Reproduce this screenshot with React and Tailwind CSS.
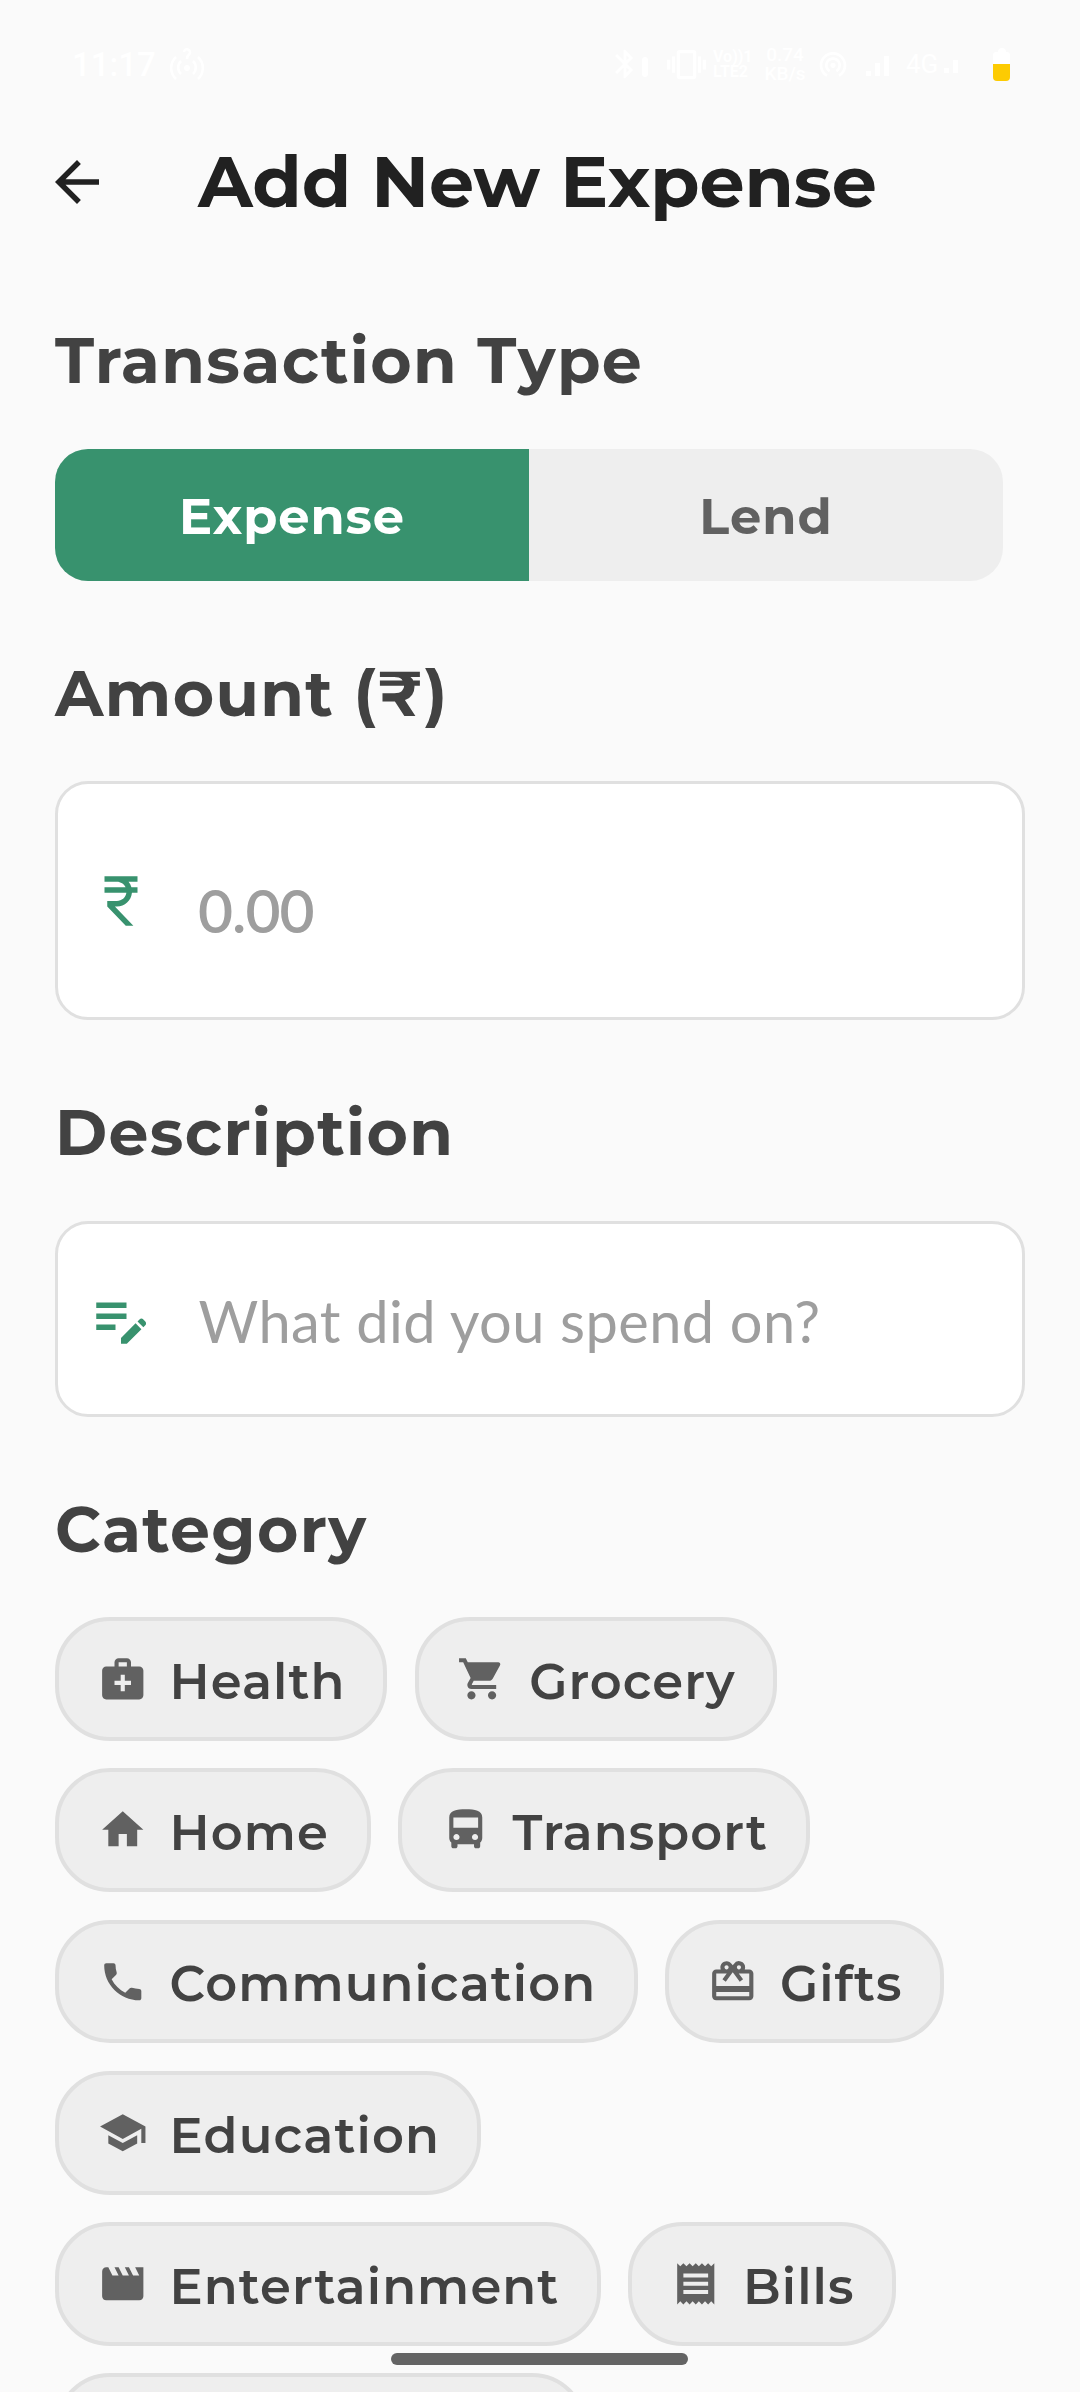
import React from "react";
import {
  MdArrowBack,
  MdBluetooth,
  MdCardGiftcard,
  MdCurrencyRupee,
  MdDirectionsBus,
  MdEditNote,
  MdHome,
  MdMedicalServices,
  MdMovie,
  MdPhone,
  MdReceipt,
  MdSchool,
  MdShoppingCart,
  MdVibration,
  MdWifiTethering,
} from "react-icons/md";

const categories = [
  { label: "Health", Icon: MdMedicalServices },
  { label: "Grocery", Icon: MdShoppingCart },
  { label: "Home", Icon: MdHome },
  { label: "Transport", Icon: MdDirectionsBus },
  { label: "Communication", Icon: MdPhone },
  { label: "Gifts", Icon: MdCardGiftcard },
  { label: "Education", Icon: MdSchool },
  { label: "Entertainment", Icon: MdMovie },
  { label: "Bills", Icon: MdReceipt },
];

// Hotspot glyph with a small question mark above its centre dot
function HotspotQuery() {
  return (
    <svg viewBox="0 0 34 32" className="h-[32px] w-[34px]" fill="none" stroke="white" strokeWidth="2.5">
      <circle cx="17" cy="20" r="3" fill="white" stroke="none" />
      <path d="M11 13a9 9 0 0 0 0 13M23 13a9 9 0 0 1 0 13" />
      <path d="M6 9a15 15 0 0 0 0 22M28 9a15 15 0 0 1 0 22" />
      <path d="M14 4a3 3 0 1 1 5 2.500q-2 1.500-2 4.500" />
    </svg>
  );
}

function StatusBar() {
  return (
    <div className="flex h-[128px] items-center pr-[70px] pl-[72px] font-['Roboto',sans-serif] text-white">
      <span className="w-[98px] text-[33px] leading-none font-medium">11:17</span>
      <HotspotQuery />
      <div className="ml-auto flex items-center">
        <MdBluetooth className="size-[34px]" />
        <span className="mt-[6px] h-[20px] w-[6px] rounded-sm bg-white" />
        <MdVibration className="ml-[19px] size-[39px]" />
        <div className="ml-[7px] flex w-[40px] flex-col text-[16px] leading-[15px] font-bold">
          <span>Vo))1</span>
          <span>LTE2</span>
        </div>
        <div className="ml-[11px] flex w-[42px] flex-col items-center text-[19px] leading-[19px] font-medium">
          <span>0.74</span>
          <span>KB/s</span>
        </div>
        <MdWifiTethering className="ml-[11px] size-[32px]" />
        <div className="ml-[17px] flex w-[30px] items-end gap-[4px] pt-[4px]">
          <span className="h-[5px] w-[5px] bg-white" />
          <span className="h-[13px] w-[5px] bg-white" />
          <span className="h-[20px] w-[5px] bg-white" />
        </div>
        <span className="ml-[10px] w-[36px] text-[26px] leading-none">4G</span>
        <div className="ml-[2px] flex w-[24px] items-end gap-[4px] pt-[4px]">
          <span className="h-[5px] w-[5px] bg-white" />
          <span className="h-[13px] w-[5px] bg-white" />
        </div>
        <div className="ml-[25px] flex flex-col items-center">
          <span className="h-[4px] w-[8px] rounded-t-sm bg-white" />
          <span className="h-[12px] w-[17px] rounded-t-[3px] bg-white" />
          <span className="h-[17px] w-[17px] rounded-b-[4px] bg-[#fdcb02]" />
        </div>
      </div>
    </div>
  );
}

function SectionTitle({ children }) {
  return (
    <h2 className="mt-[74px] mb-[49.5px] h-[77px] text-[63.25px] leading-[77px] font-bold tracking-[1.34px] text-[#424242]">
      {children}
    </h2>
  );
}

function Chip({ label, Icon }) {
  return (
    <button className="flex h-[123.75px] items-center gap-[22.5px] rounded-[55px] border-[4px] border-[#e0e0e0] bg-[#eeeeee] pr-[37.6px] pl-[38.6px]">
      <Icon className="size-[49.5px] shrink-0 text-[#616161]" />
      <span className="pt-[4px] text-[49.5px] leading-[60px] font-semibold tracking-[1.08px] whitespace-nowrap text-[#424242]">
        {label}
      </span>
    </button>
  );
}

export default function App() {
  return (
    <div className="relative h-[2392px] w-[1080px] overflow-hidden bg-[#fafafa] font-['Montserrat','Inter',sans-serif]">
      <StatusBar />

      <header className="flex h-[108px] items-center pl-[44px]">
        <MdArrowBack className="size-[66px] text-[#212121]" />
        <h1 className="ml-[88px] text-[71.5px] leading-[88px] font-bold tracking-[-0.08px] text-[#212121]">
          Add New Expense
        </h1>
      </header>

      <main className="flex flex-col px-[55px] pt-[12px]">
        <SectionTitle>Transaction Type</SectionTitle>
        <div className="flex h-[132px] w-[948px] overflow-hidden rounded-[33px] bg-[#eeeeee] text-[49.5px] font-bold tracking-[0.95px]">
          <button className="w-1/2 bg-[#38926e] pt-[3px] text-white">Expense</button>
          <button className="w-1/2 pt-[3px] text-[#616161]">Lend</button>
        </div>

        <SectionTitle>Amount (₹)</SectionTitle>
        <div className="flex h-[239px] items-center rounded-[33px] border-[3px] border-[#e0e0e0] bg-white pl-[30px] font-['Lato',sans-serif]">
          <MdCurrencyRupee className="size-[66px] text-[#38926e]" />
          <span className="ml-[44px] pt-[19px] text-[60.5px] leading-[72px] font-semibold tracking-[-1px] text-[#9e9e9e]">
            0.00
          </span>
        </div>

        <SectionTitle>Description</SectionTitle>
        <div className="flex h-[196px] items-center rounded-[33px] border-[3px] border-[#e0e0e0] bg-white pl-[30px] font-['Lato',sans-serif]">
          <MdEditNote className="size-[66px] text-[#38926e]" />
          <span className="ml-[44.5px] pt-[5px] text-[57.75px] leading-[72px] tracking-[0.42px] text-[#9e9e9e]">
            What did you spend on?
          </span>
        </div>

        <SectionTitle>Category</SectionTitle>
        <div className="flex flex-wrap gap-[27.5px]">
          {categories.map((c) => (
            <Chip key={c.label} {...c} />
          ))}
          <div className="h-[123.75px] w-[532px] rounded-[55px] border-[4px] border-[#e0e0e0] bg-[#eeeeee]" />
        </div>
      </main>

      <div className="absolute top-[2353px] left-[391px] h-[12px] w-[297px] rounded-full bg-[#646464]" />
    </div>
  );
}
